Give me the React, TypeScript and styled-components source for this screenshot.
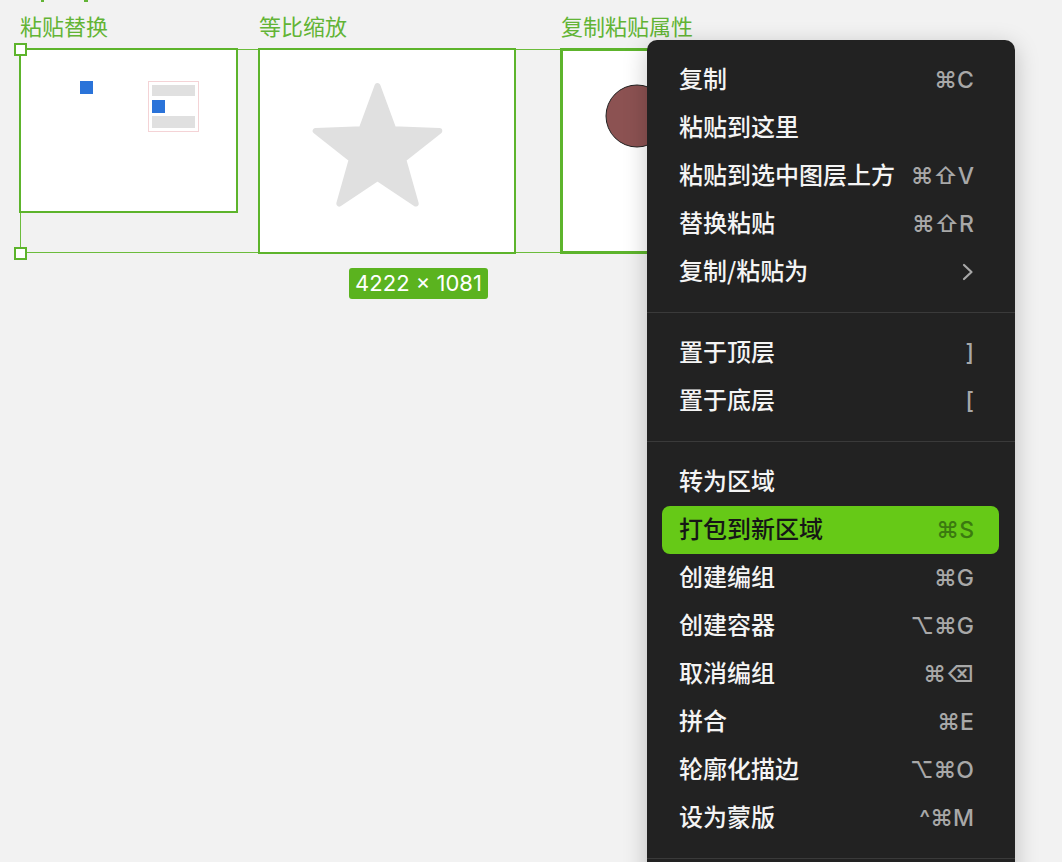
import { FC } from 'react';
import styled, { createGlobalStyle } from 'styled-components';

const green = '#5db42c';
const labelGreen = '#62b435';

const GlobalStyle = createGlobalStyle`
    html, body {
        margin: 0;
        padding: 0;
        height: 100%;
        overflow: hidden;
        background: #f2f2f2;
    }
`;

const Canvas = styled.div`
    position: relative;
    width: 1062px;
    height: 862px;
    overflow: hidden;
    background: #f2f2f2;
    font-family: "Noto Sans CJK SC", "Noto Sans", sans-serif;
`;

const Node = styled.div<{ $x: number }>`
    position: absolute;
    left: ${p => p.$x}px;
    top: 12px;
    display: flex;
    flex-direction: column;
    gap: 10px;
`;

const Label = styled.div`
    height: 26px;
    line-height: 26px;
    font-size: 22px;
    color: ${labelGreen};
    white-space: nowrap;
    padding-left: 1px;
`;

const Frame = styled.div<{ $w: number; $h: number; $border?: number }>`
    box-sizing: border-box;
    width: ${p => p.$w}px;
    height: ${p => p.$h}px;
    background: #fff;
    border: ${p => p.$border ?? 2}px solid ${green};
    svg {
        display: block;
        width: 100%;
        height: 100%;
    }
`;

const Selection = styled.div`
    position: absolute;
    left: 20px;
    top: 49px;
    width: 660px;
    height: 204px;
    box-sizing: border-box;
    border: 1px solid #6cbc3c;
    border-right: none;
    pointer-events: none;
`;

const Handle = styled.div<{ $y: number }>`
    position: absolute;
    left: 14px;
    top: ${p => p.$y - 6}px;
    width: 13px;
    height: 13px;
    box-sizing: border-box;
    background: #fff;
    border: 2px solid ${green};
`;

const TopMark = styled.div<{ $x: number; $w: number }>`
    position: absolute;
    left: ${p => p.$x}px;
    top: 0;
    width: ${p => p.$w}px;
    height: 2px;
    background: ${labelGreen};
`;

const SizeBadge = styled.div`
    position: absolute;
    left: 349px;
    top: 268px;
    width: 139px;
    height: 31px;
    border-radius: 3px;
    background: #5bb31f;
    color: #fff;
    font-family: Inter, "Liberation Sans", sans-serif;
    font-size: 22px;
    line-height: 31px;
    text-align: center;
    white-space: nowrap;
`;

const Menu = styled.div`
    position: absolute;
    left: 647px;
    top: 40px;
    width: 368px;
    height: 900px;
    background: #222222;
    border-radius: 10px;
    box-shadow: 0 6px 24px rgba(0, 0, 0, 0.22);
    display: flex;
    flex-direction: column;
`;

const Section = styled.div`
    padding: 16px 0;
    display: flex;
    flex-direction: column;
`;

const Separator = styled.div`
    height: 1px;
    background: #3a3a3a;
`;

const Item = styled.div<{ $active?: boolean }>`
    height: 48px;
    margin: 0 16px 0 15px;
    padding: 0 25px 0 17px;
    border-radius: 8px;
    display: flex;
    align-items: center;
    justify-content: space-between;
    background: ${p => (p.$active ? '#66c917' : 'transparent')};
`;

const ItemText = styled.span<{ $active?: boolean }>`
    font-size: 24px;
    font-weight: 500;
    line-height: 30px;
    margin-top: -4px;
    color: ${p => (p.$active ? '#161616' : '#f4f4f4')};
    white-space: nowrap;
`;

const Shortcut = styled.span<{ $active?: boolean }>`
    font-family: Inter, "DejaVu Sans", sans-serif;
    font-size: 23px;
    font-weight: 500;
    color: ${p => (p.$active ? '#3b7a10' : '#a8a8a8')};
    white-space: nowrap;
    display: flex;
    align-items: center;
`;

type Entry = { label: string; keys?: string; sub?: boolean; active?: boolean };

const sections: Entry[][] = [
    [
        { label: '复制', keys: '⌘C' },
        { label: '粘贴到这里' },
        { label: '粘贴到选中图层上方', keys: '⌘⇧V' },
        { label: '替换粘贴', keys: '⌘⇧R' },
        { label: '复制/粘贴为', sub: true },
    ],
    [
        { label: '置于顶层', keys: ']' },
        { label: '置于底层', keys: '[' },
    ],
    [
        { label: '转为区域' },
        { label: '打包到新区域', keys: '⌘S', active: true },
        { label: '创建编组', keys: '⌘G' },
        { label: '创建容器', keys: '⌥⌘G' },
        { label: '取消编组', keys: '⌘⌫' },
        { label: '拼合', keys: '⌘E' },
        { label: '轮廓化描边', keys: '⌥⌘O' },
        { label: '设为蒙版', keys: '^⌘M' },
    ],
];

const starPoints = (cx: number, cy: number, R: number, r: number) => {
    const pts: string[] = [];
    for (let i = 0; i < 10; i++) {
        const rad = i % 2 === 0 ? R : r;
        const a = -Math.PI / 2 + (i * Math.PI) / 5;
        pts.push(`${(cx + rad * Math.cos(a)).toFixed(1)},${(cy + rad * Math.sin(a)).toFixed(1)}`);
    }
    return pts.join(' ');
};

const Chevron = () => (
    <svg width="12" height="18" viewBox="0 0 12 18">
        <path d="M2 2 L9.5 9 L2 16" fill="none" stroke="#a8a8a8" strokeWidth="2.2" strokeLinecap="round" strokeLinejoin="round" />
    </svg>
);

const App: FC = () => {
    return (
        <Canvas>
            <GlobalStyle />
            <TopMark $x={41} $w={3} />
            <TopMark $x={84} $w={4} />

            <Selection />

            <Node $x={19}>
                <Label>粘贴替换</Label>
                <Frame $w={219} $h={165}>
                    <svg viewBox="0 0 215 161">
                        <rect x="59" y="31" width="13" height="13" fill="#2a73d9" />
                        <rect x="127.5" y="31.5" width="50" height="50" fill="#fff" stroke="#f4d3d6" />
                        <rect x="131" y="35" width="43" height="11" fill="#e0e0e0" />
                        <rect x="131" y="50" width="13" height="13" fill="#2a73d9" />
                        <rect x="131" y="66" width="43" height="12" fill="#e0e0e0" />
                    </svg>
                </Frame>
            </Node>

            <Node $x={258}>
                <Label>等比缩放</Label>
                <Frame $w={258} $h={206}>
                    <svg viewBox="0 0 254 202">
                        <polygon
                            points={starPoints(117.5, 101, 65, 27)}
                            fill="#e0e0e0"
                            stroke="#e0e0e0"
                            strokeWidth="6"
                            strokeLinejoin="round"
                        />
                    </svg>
                </Frame>
            </Node>

            <Node $x={560}>
                <Label>复制粘贴属性</Label>
                <Frame $w={200} $h={206} $border={3}>
                    <svg viewBox="0 0 194 200">
                        <circle cx="74" cy="65" r="31" fill="#8c5252" stroke="#222" strokeWidth="1" />
                    </svg>
                </Frame>
            </Node>

            <Handle $y={49} />
            <Handle $y={253} />

            <SizeBadge>4222 × 1081</SizeBadge>

            <Menu>
                {sections.map((items, si) => (
                    <div key={si}>
                        {si > 0 && <Separator />}
                        <Section>
                            {items.map(item => (
                                <Item key={item.label} $active={item.active}>
                                    <ItemText $active={item.active}>{item.label}</ItemText>
                                    {item.keys && <Shortcut $active={item.active}>{item.keys}</Shortcut>}
                                    {item.sub && <Chevron />}
                                </Item>
                            ))}
                        </Section>
                    </div>
                ))}
                <Separator />
            </Menu>
        </Canvas>
    );
};

export default App;
